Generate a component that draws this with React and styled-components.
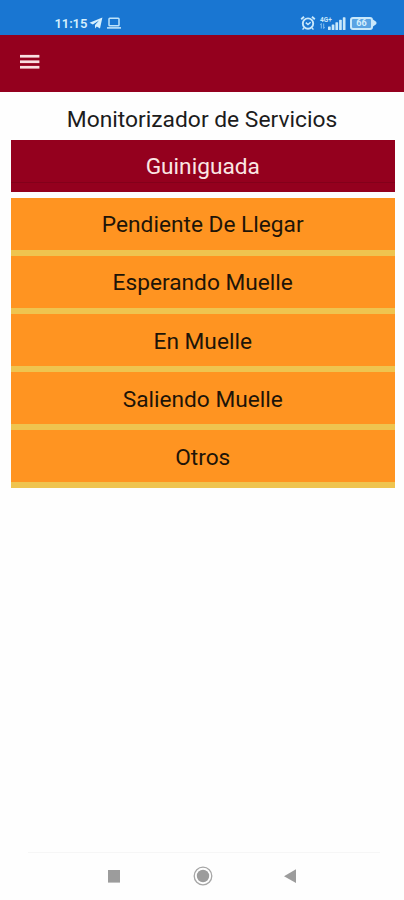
import React from "react";
import styled, { createGlobalStyle } from "styled-components";

const services = [
  "Pendiente De Llegar",
  "Esperando Muelle",
  "En Muelle",
  "Saliendo Muelle",
  "Otros",
];

const AlarmIcon = () => (
  <svg width="16" height="16" viewBox="0 0 16 16" fill="none" stroke="#c9e8fb">
    <circle cx="8" cy="8.6" r="5.2" strokeWidth="1.9" />
    <path d="M1.2 4.2 4 1.7M14.8 4.2 12 1.7" strokeWidth="1.9" />
    <path d="M3.8 13 2.6 14.6M12.2 13l1.2 1.6" strokeWidth="1.4" />
    <path d="M5.8 7.6 8 9.6l2.6-2.4" strokeWidth="1.5" />
  </svg>
);

const SignalIcon = () => (
  <svg width="18" height="13" viewBox="0 0 18 13" fill="#c9e8fb">
    <rect x="0" y="9.5" width="2.7" height="3.5" rx=".6" />
    <rect x="3.7" y="7.5" width="2.7" height="5.5" rx=".6" />
    <rect x="7.4" y="5.2" width="2.7" height="7.8" rx=".6" />
    <rect x="11.1" y="2.7" width="2.7" height="10.3" rx=".6" />
    <rect x="14.8" y="0.3" width="2.7" height="12.7" rx=".6" />
  </svg>
);

const App = () => {
  return (
    <Screen>
      <GlobalStyle />
      <StatusBar>
        <StatusGroup>
          <Time>11:15</Time>
          <svg width="14" height="12" viewBox="0 0 14 12" fill="#d5effd">
            <path d="M13.4.6.5 5.8l3.4 1.7L10 3.4 6 8v3.4l1.8-1.8 3.2 2z" />
          </svg>
          <LaptopIcon width="14" height="12" viewBox="0 0 14 12" fill="none" stroke="#bfe3fa">
            <rect x="2" y="1.2" width="10" height="7.6" rx=".8" strokeWidth="1.5" />
            <path d="M0 10.9h14" strokeWidth="1.6" />
          </LaptopIcon>
        </StatusGroup>
        <StatusGroup>
          <AlarmIcon />
          <Network>
            <span>4G+</span>
            <svg width="5" height="6" viewBox="0 0 5 6" stroke="#8fc6f2" fill="none">
              <path d="M1.3 5.5v-5M.2 1.8 1.3.5M3.7.5v5M4.8 4.2 3.7 5.5" strokeWidth=".9" />
            </svg>
          </Network>
          <SignalIcon />
          <Battery>
            <BatteryLevel>66</BatteryLevel>
            <svg width="4" height="8" viewBox="0 0 4 8" fill="#c9e8fb">
              <path d="M0 .5 3.4 3v2L0 7.5z" />
            </svg>
          </Battery>
        </StatusGroup>
      </StatusBar>
      <Header>
        <MenuButton aria-label="Menu">
          <svg width="20" height="16" viewBox="0 0 20 16" fill="#f9dfe1">
            <rect x="0" y="0.9" width="19.4" height="2.7" />
            <rect x="0" y="6.4" width="19.4" height="2.7" />
            <rect x="0" y="11.9" width="19.4" height="2.7" />
          </svg>
        </MenuButton>
      </Header>
      <Title>Monitorizador de Servicios</Title>
      <Main>
        <PortButton>Guiniguada</PortButton>
        {services.map((service) => (
          <ServiceButton key={service}>{service}</ServiceButton>
        ))}
      </Main>
      <NavBar>
        <svg width="190" height="22" viewBox="0 0 190 22">
          <rect x="1" y="5" width="12" height="12.6" fill="#9c9c9c" />
          <circle cx="96" cy="11" r="8.8" fill="none" stroke="#a6a6a6" strokeWidth="1.3" />
          <circle cx="96" cy="11" r="6.2" fill="#9c9c9c" />
          <path d="M177 11.2 189 4.3v13.8z" fill="#9c9c9c" />
        </svg>
      </NavBar>
    </Screen>
  );
};

export default App;

const GlobalStyle = createGlobalStyle`
  body {
    margin: 0;
    background-color: #fefefe;
  }
  * {
    box-sizing: border-box;
  }
`;
const Screen = styled.div`
  display: flex;
  flex-direction: column;
  width: 404px;
  height: 900px;
  overflow: hidden;
  font-family: Roboto, "Liberation Sans", sans-serif;
`;
const StatusBar = styled.div`
  display: flex;
  justify-content: space-between;
  flex-shrink: 0;
  height: 34.5px;
  padding: 11px 27px 0 54.5px;
  background-color: #1976d2;
`;
const StatusGroup = styled.div`
  display: flex;
  align-items: center;
  height: 24px;
`;
const Time = styled.span`
  width: 34.5px;
  font-size: 13px;
  font-weight: 600;
  letter-spacing: -0.1px;
  color: #d5effd;
`;
const LaptopIcon = styled.svg`
  margin-left: 4px;
`;
const Network = styled.div`
  display: flex;
  flex-direction: column;
  width: 8px;
  height: 13px;
  margin-left: 4px;
  white-space: nowrap;
  font-size: 6.5px;
  line-height: 6px;
  font-weight: 700;
  color: #c9e8fb;
`;
const Battery = styled.div`
  display: flex;
  align-items: center;
  margin-left: 4px;
`;
const BatteryLevel = styled.span`
  width: 23px;
  height: 13px;
  border: 2px solid #c9e8fb;
  border-radius: 3px;
  background-color: #5aa3e3;
  font-size: 9px;
  line-height: 9px;
  font-weight: 700;
  text-align: center;
  color: #d5effd;
`;
const Header = styled.header`
  display: flex;
  align-items: center;
  flex-shrink: 0;
  height: 57.5px;
  padding: 0 20px 3px;
  background-color: #94001e;
`;
const MenuButton = styled.button`
  display: flex;
  padding: 0;
  border: none;
  background: none;
`;
const Title = styled.h1`
  flex-shrink: 0;
  height: 47.5px;
  margin: 0;
  padding-top: 4px;
  font-size: 22.8px;
  line-height: 48px;
  font-weight: 400;
  text-align: center;
  color: #1c1c1c;
`;
const Main = styled.main`
  display: flex;
  flex-direction: column;
  padding: 0 9.5px 0 11px;
`;
const ServiceButton = styled.button`
  height: 58.2px;
  padding: 2.4px 0 0;
  border: none;
  border-bottom: 6px solid #efc44f;
  background-color: #ff9421;
  font-family: inherit;
  font-size: 22.7px;
  color: #1e1408;
`;
const PortButton = styled(ServiceButton)`
  height: 52px;
  margin-bottom: 6px;
  padding-top: 2px;
  border-bottom: none;
  background: linear-gradient(#94001e 42px, #83001a 42px, #83001a 43px, #94001e 43px);
  color: #fbe6e4;
`;
const NavBar = styled.nav`
  display: flex;
  justify-content: center;
  height: 48px;
  margin: auto 24px 0 28px;
  padding: 12px 4px 0 0;
  border-top: 1px solid #f6f6f6;
`;
